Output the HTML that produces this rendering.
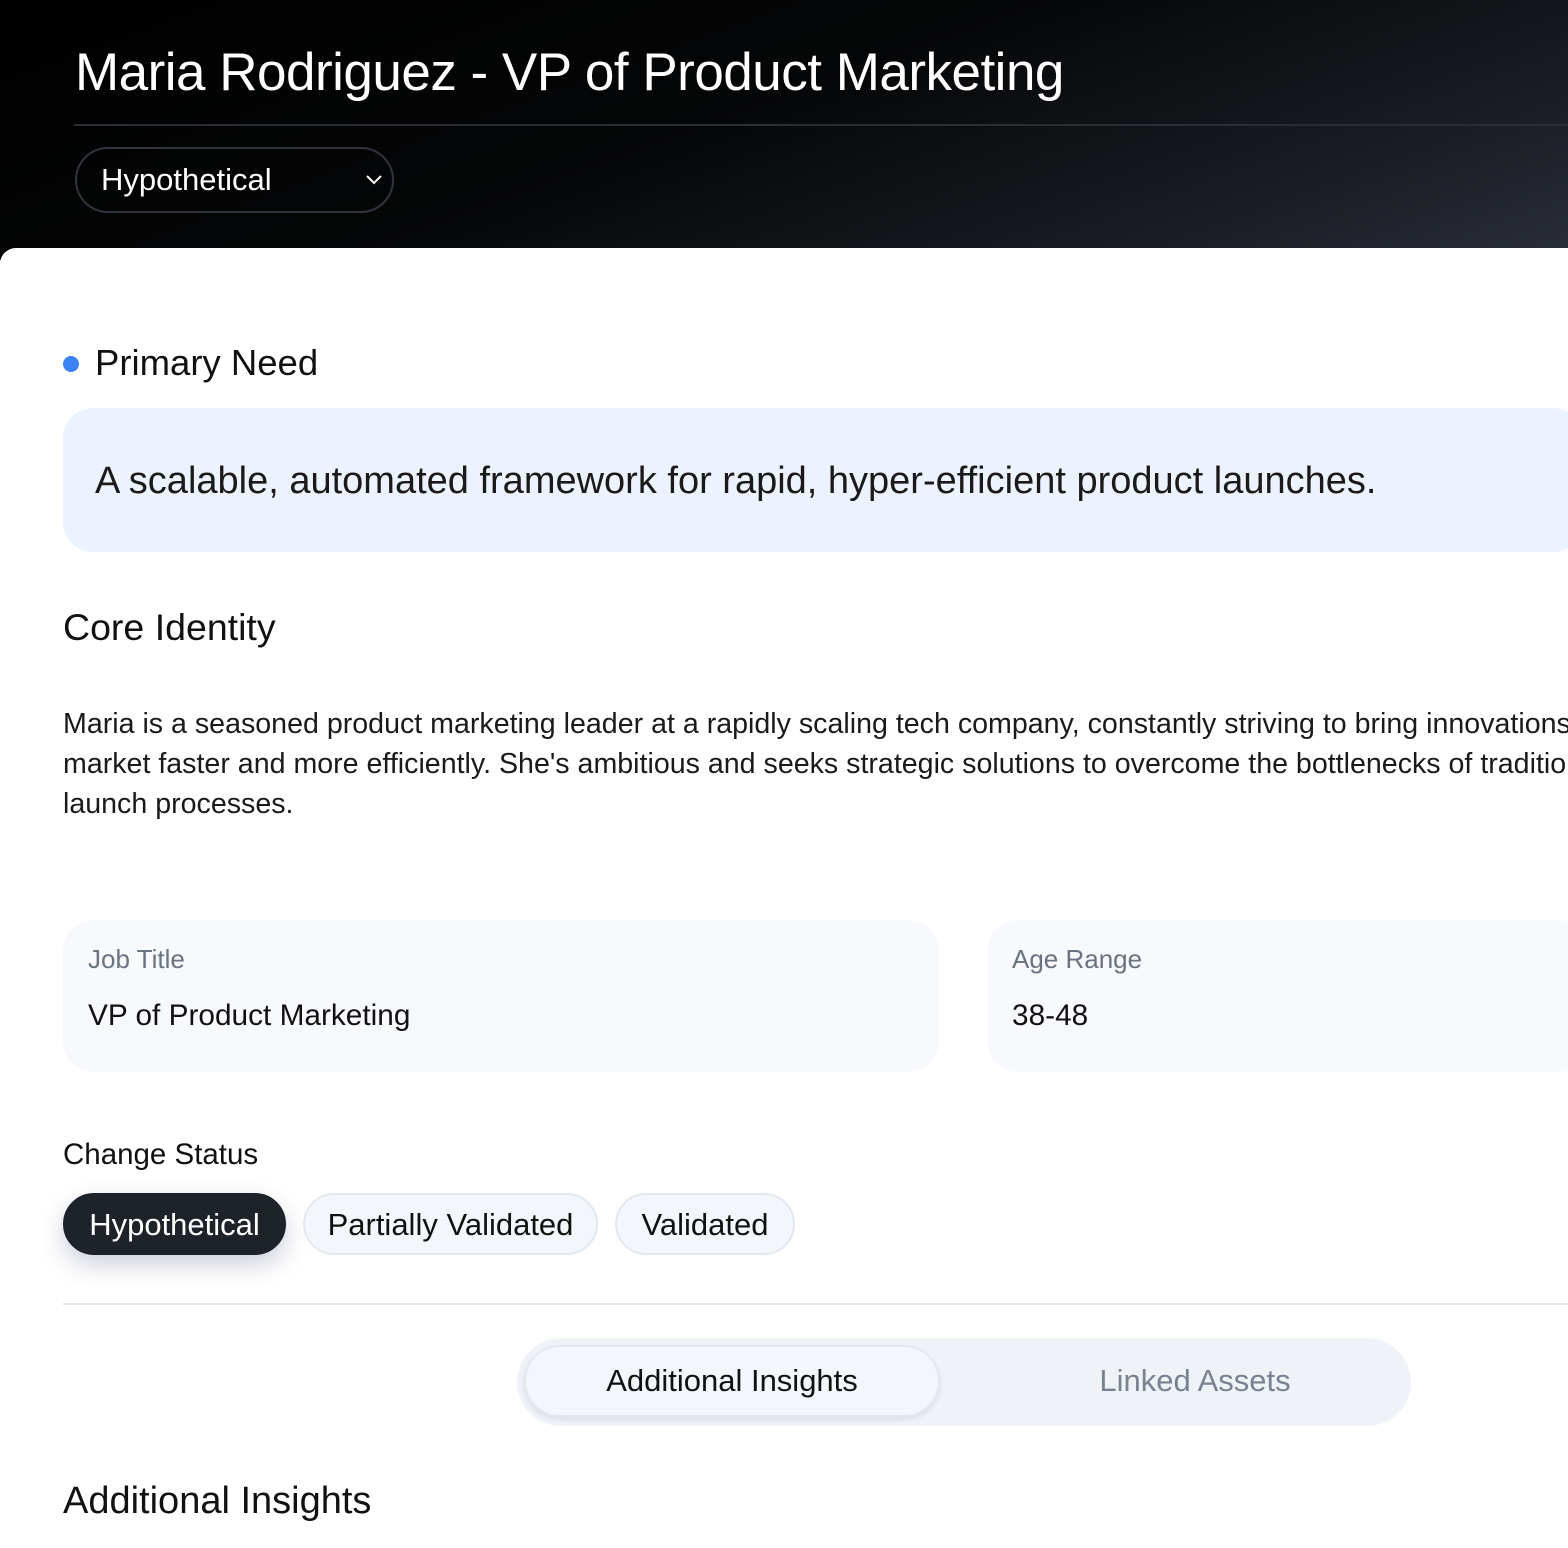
<!DOCTYPE html>
<html><head><meta charset="utf-8"><style>
*{margin:0;padding:0;box-sizing:border-box}
body{width:1568px;height:1524px;overflow:hidden;background:#fff;font-family:"Liberation Sans",sans-serif;color:#111}
.hdr{position:absolute;left:0;top:0;width:1568px;height:260px;background:linear-gradient(160deg,#000 0%,#050607 45%,#1a1d24 80%,#2a2e37 100%)}
.title{position:absolute;left:75px;top:42px;font-size:53px;color:#fff;letter-spacing:-0.5px;white-space:nowrap}
.hline{position:absolute;left:74px;top:124px;right:0;height:2px;background:#2a2d33}
.sel{position:absolute;left:75px;top:147px;width:319px;height:66px;border:2px solid #30343c;border-radius:33px;color:#fff;font-size:31px;padding:13px 0 0 24px}
.sel svg{position:absolute;right:8px;top:24px}
.card{position:absolute;left:0;top:248px;width:1568px;height:1300px;background:#fff;border-radius:16px 0 0 0}
.abs{position:absolute;white-space:nowrap}
.dot{left:63px;top:356px;width:16px;height:16px;border-radius:50%;background:#3b82f6}
.need{position:absolute;left:63px;top:408px;width:1520px;height:144px;background:#edf3fe;border-radius:30px}
.box{position:absolute;top:920px;height:152px;background:#f7f9fc;border-radius:30px}
.pill{position:absolute;top:1193px;height:62px;border-radius:31px;font-size:31px;padding-top:12px;text-align:center;border:2px solid #e3e8f0;background:#f3f6fa}
</style></head><body>
<div class="hdr">
<div class="title">Maria Rodriguez - VP of Product Marketing</div>
<div class="hline"></div>
<div class="sel">Hypothetical<svg width="20" height="14" viewBox="0 0 20 14"><path d="M3 3l7 7 7-7" stroke="#fff" stroke-width="2" fill="none"/></svg></div>
</div>
<div class="card"></div>
<div class="abs dot"></div>
<div class="abs" style="left:95px;top:342px;font-size:36.5px">Primary Need</div>
<div class="need"></div>
<div class="abs" style="left:95px;top:460px;font-size:38px;color:#1a1a1a">A scalable, automated framework for rapid, hyper-efficient product launches.</div>
<div class="abs" style="left:63px;top:606px;font-size:37.5px">Core Identity</div>
<div class="abs" style="left:63px;top:704px;font-size:28.6px;line-height:40px;color:#1a1a1a">Maria is a seasoned product marketing leader at a rapidly scaling tech company, constantly striving to bring innovations to<br>market faster and more efficiently. She's ambitious and seeks strategic solutions to overcome the bottlenecks of traditional<br>launch processes.</div>
<div class="box" style="left:63px;width:876px"></div>
<div class="box" style="left:988px;width:600px"></div>
<div class="abs" style="left:88px;top:944px;font-size:26px;color:#6b7280">Job Title</div>
<div class="abs" style="left:88px;top:999px;font-size:29.8px">VP of Product Marketing</div>
<div class="abs" style="left:1012px;top:944px;font-size:26px;color:#6b7280">Age Range</div>
<div class="abs" style="left:1012px;top:999px;font-size:29.8px">38-48</div>
<div class="abs" style="left:63px;top:1138px;font-size:29.5px">Change Status</div>
<div class="pill" style="left:63px;width:223px;background:#1e2229;border-color:#1e2229;color:#fff;box-shadow:0 10px 24px rgba(60,70,110,.25)">Hypothetical</div>
<div class="pill" style="left:303px;width:295px">Partially Validated</div>
<div class="pill" style="left:615px;width:180px">Validated</div>
<div class="abs" style="left:63px;top:1303px;width:1510px;height:2px;background:#e3e6ef"></div>
<div class="abs" style="left:517px;top:1338px;width:894px;height:88px;border-radius:44px;background:#eff3f8"></div>
<div class="abs" style="left:524px;top:1345px;width:416px;height:72px;border-radius:36px;background:#f3f6fa;border:2px solid #e3e8f0;box-shadow:0 3px 6px rgba(0,0,0,.08)"></div>
<div class="abs" style="left:524px;width:416px;top:1363px;text-align:center;font-size:31px">Additional Insights</div>
<div class="abs" style="left:990px;width:410px;top:1363px;text-align:center;font-size:31px;color:#7a8191">Linked Assets</div>
<div class="abs" style="left:63px;top:1480px;font-size:38px">Additional Insights</div>
</body></html>
